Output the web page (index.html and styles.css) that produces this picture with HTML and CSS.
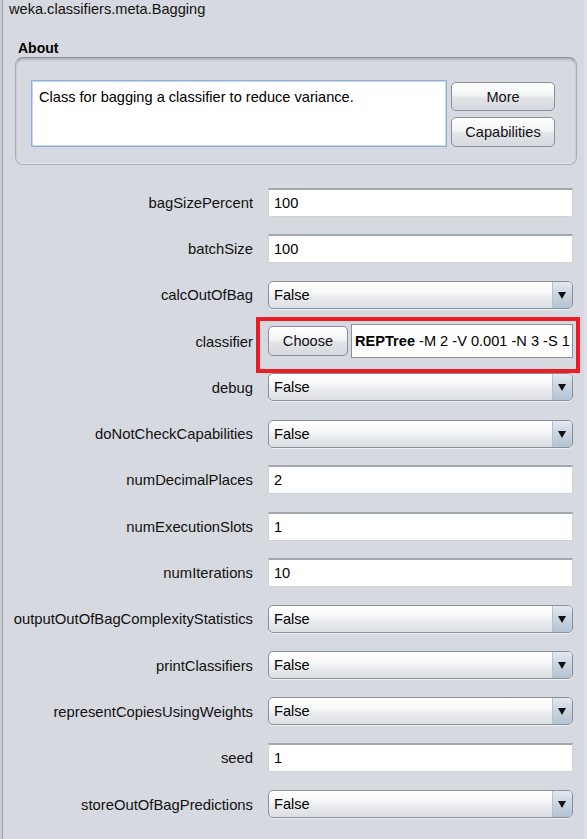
FILE: index.html
```html
<!DOCTYPE html>
<html>
<head>
<meta charset="utf-8">
<link rel="stylesheet" href="styles.css">
</head>
<body>
<div class="window">
  <div class="edge-left"></div>
  <div class="content">
    <div class="title">weka.classifiers.meta.Bagging</div>
    <div class="about-label">About</div>
    <div class="about">
      <div class="about-text">Class for bagging a classifier to reduce variance.</div>
      <div class="about-buttons">
        <div class="btn">More</div>
        <div class="btn">Capabilities</div>
      </div>
    </div>
    <div class="props">
      <div class="label">bagSizePercent</div>
      <div class="cell"><div class="text">100</div></div>

      <div class="label">batchSize</div>
      <div class="cell"><div class="text">100</div></div>

      <div class="label">calcOutOfBag</div>
      <div class="cell"><div class="combo"><span class="combo-val">False</span><span class="arrow"></span></div></div>

      <div class="label">classifier</div>
      <div class="cell chooser">
        <div class="btn choose">Choose</div>
        <div class="spec"><b>REPTree</b> -M 2 -V 0.001 -N 3 -S 1</div>
        <div class="highlight"></div>
      </div>

      <div class="label">debug</div>
      <div class="cell"><div class="combo"><span class="combo-val">False</span><span class="arrow"></span></div></div>

      <div class="label">doNotCheckCapabilities</div>
      <div class="cell"><div class="combo"><span class="combo-val">False</span><span class="arrow"></span></div></div>

      <div class="label">numDecimalPlaces</div>
      <div class="cell"><div class="text">2</div></div>

      <div class="label">numExecutionSlots</div>
      <div class="cell"><div class="text">1</div></div>

      <div class="label">numIterations</div>
      <div class="cell"><div class="text">10</div></div>

      <div class="label">outputOutOfBagComplexityStatistics</div>
      <div class="cell"><div class="combo"><span class="combo-val">False</span><span class="arrow"></span></div></div>

      <div class="label">printClassifiers</div>
      <div class="cell"><div class="combo"><span class="combo-val">False</span><span class="arrow"></span></div></div>

      <div class="label">representCopiesUsingWeights</div>
      <div class="cell"><div class="combo"><span class="combo-val">False</span><span class="arrow"></span></div></div>

      <div class="label">seed</div>
      <div class="cell"><div class="text">1</div></div>

      <div class="label">storeOutOfBagPredictions</div>
      <div class="cell"><div class="combo"><span class="combo-val">False</span><span class="arrow"></span></div></div>
    </div>
  </div>
</div>
</body>
</html>
```

FILE: styles.css
```css
html, body {
  margin: 0;
  padding: 0;
  background: #d6d9df;
}
body {
  width: 587px;
  height: 839px;
  overflow: hidden;
  font-family: "Liberation Sans", Arial, sans-serif;
  font-size: 14.6px;
  color: #000;
}
.window {
  display: flex;
  height: 839px;
}
.edge-left {
  width: 2px;
  flex: none;
  background: #c9ccd2;
  border-right: 1px solid #9a9ea6;
}
.content {
  flex: 1;
  display: flex;
  flex-direction: column;
  border-right: 3px solid #dde0e5;
}
.title {
  height: 18px;
  line-height: 18px;
  padding-left: 6px;
  color: #111;
}
.about-label {
  margin-top: 22px;
  padding-left: 15px;
  font-weight: bold;
  font-size: 14px;
  line-height: 16px;
  height: 17px;
}
.about {
  margin-left: 12px;
  width: 562px;
  height: 108px;
  border: 1px solid #a9adb4;
  border-top-color: #8d9198;
  border-radius: 8px;
  box-shadow: inset 0 2px 2px rgba(0,0,0,0.18), inset 0 -1px 0 #e6e8ec;
  display: flex;
  align-items: flex-start;
  padding: 22px 21px 0 15px;
  box-sizing: border-box;
  gap: 4px;
}
.about-text {
  width: 416px;
  height: 67px;
  box-sizing: border-box;
  background: #fff;
  border: 1px solid #8fb0d8;
  box-shadow: inset 0 0 0 1px #c5d6ec;
  padding: 8px 7px;
  line-height: 16px;
}
.about-buttons {
  display: flex;
  flex-direction: column;
  gap: 6px;
  padding-top: 2px;
}
.btn {
  box-sizing: border-box;
  width: 104px;
  height: 29px;
  border: 1px solid #8a9099;
  border-radius: 5px;
  background: linear-gradient(#ffffff, #f3f4f6 45%, #e2e4e8 55%, #d5d8dd);
  box-shadow: inset 0 1px 0 #fff;
  display: flex;
  align-items: center;
  justify-content: center;
  color: #111;
}
.about-buttons .btn + .btn {
  height: 30px;
}
.props {
  margin-top: 14px;
  display: grid;
  grid-template-columns: 250px 305px;
  grid-auto-rows: 46.3px;
  column-gap: 15px;
}
.label {
  display: flex;
  align-items: center;
  justify-content: flex-end;
  color: #111;
  white-space: nowrap;
  font-size: 14.8px;
  padding-top: 1px;
}
.cell {
  display: flex;
  align-items: center;
  position: relative;
}
.text {
  box-sizing: border-box;
  width: 305px;
  height: 29px;
  background: #fff;
  border: 1px solid #d0d3d8;
  border-top: 2px solid #a3a7ae;
  padding: 0 5px;
  display: flex;
  align-items: center;
}
.combo {
  box-sizing: border-box;
  width: 305px;
  height: 28px;
  border: 1px solid #8a9099;
  border-radius: 5px;
  background: linear-gradient(#ffffff, #f6f7f8 40%, #e9ebee 60%, #dcdfe3);
  display: flex;
  align-items: center;
  overflow: hidden;
  box-shadow: 0 1px 0 rgba(255,255,255,0.6);
}
.combo-val {
  flex: 1;
  padding-left: 5px;
}
.arrow {
  width: 19px;
  align-self: stretch;
  border-left: 1px solid #b9c1cb;
  background: linear-gradient(#e3e9f1, #c9d4e0 50%, #b3c2d2);
  position: relative;
}
.arrow::after {
  content: "";
  position: absolute;
  left: 5px;
  top: 10px;
  border-left: 4px solid transparent;
  border-right: 4px solid transparent;
  border-top: 7px solid #111;
}
.chooser {
  gap: 3px;
}
.btn.choose {
  width: 80px;
  height: 30px;
  flex: none;
}
.spec {
  box-sizing: border-box;
  width: 222px;
  height: 34px;
  background: #fff;
  border: 1px solid #8e939a;
  display: flex;
  align-items: center;
  padding-left: 3px;
  white-space: nowrap;
  overflow: hidden;
}
.spec b {
  margin-right: 4px;
}
.highlight {
  position: absolute;
  left: -12px;
  top: -1px;
  width: 324px;
  height: 56px;
  box-sizing: border-box;
  border: 4px solid #ec1c24;
  pointer-events: none;
}
```
